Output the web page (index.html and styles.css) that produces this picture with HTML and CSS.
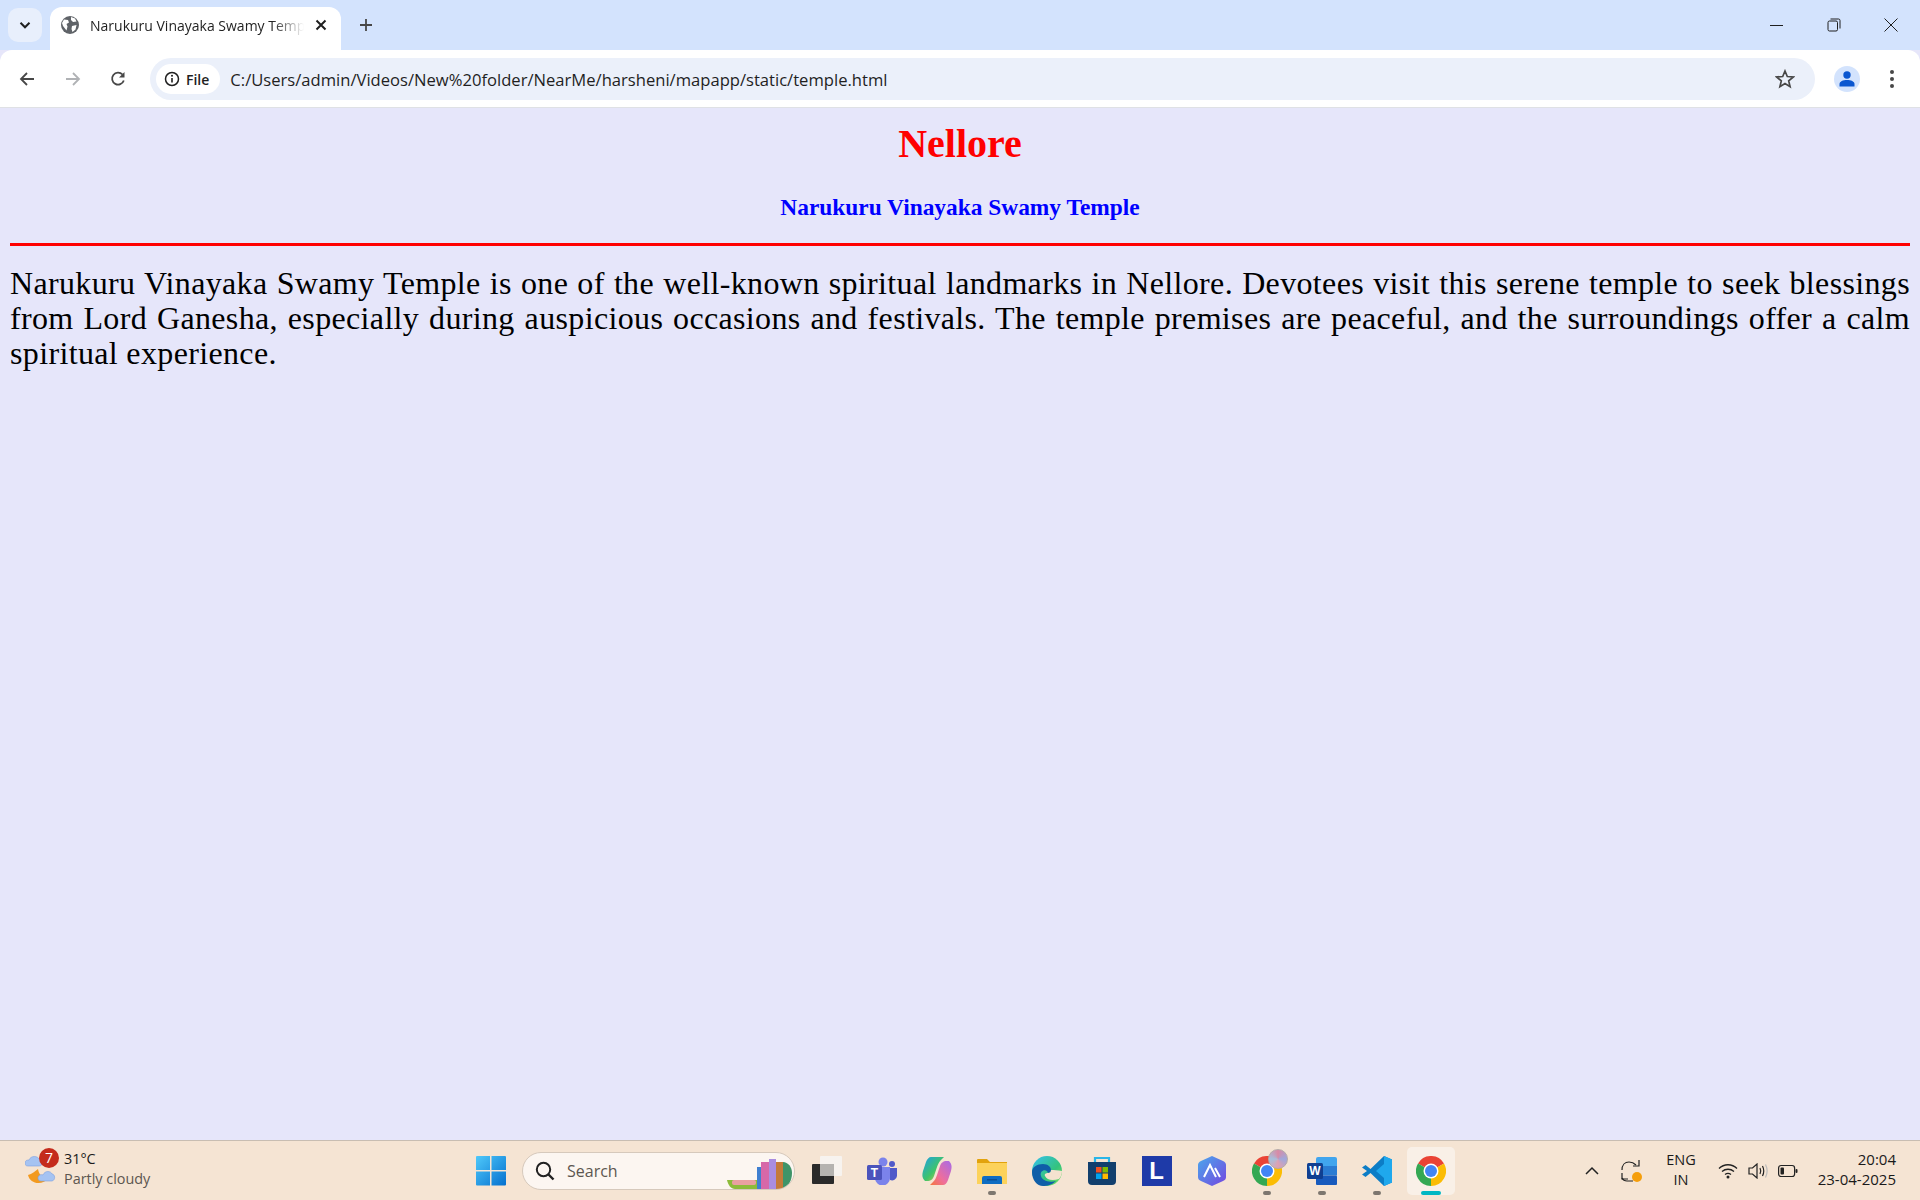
FILE: index.html
```html
<!DOCTYPE html>
<html lang="en">
<head>
  <meta charset="UTF-8" />
  <title>Narukuru Vinayaka Swamy Temple</title>
  <link rel="stylesheet" href="styles.css">
</head>
<body>

  <div class="tabstrip">
    <div class="tab-search">
      <svg width="14" height="14" viewBox="0 0 14 14"><path d="M2.500 4.800 7 9.300l4.500-4.500" fill="none" stroke="#1f1f1f" stroke-width="2"/></svg>
    </div>
    <div class="tab">
      <svg class="tab-globe" width="18" height="18" viewBox="0 0 18 18"><circle cx="9" cy="9" r="9" fill="#5f6368"/><path d="M3 3.500 7 4l1 2.500L5.500 8l1 2.500-1 4L2 10 1 7zM10 1l4 1.500 1.500 3-3.500.5-2-2zM11 10l4.500-1-1 4.500L11.500 16l-1-3z" fill="#fff"/></svg>
      <span class="tab-title">Narukuru Vinayaka Swamy Temple</span>
      <svg class="tab-close" width="12" height="12" viewBox="0 0 12 12"><path d="M1.500 1.500l9 9m0-9l-9 9" stroke="#1f1f1f" stroke-width="2"/></svg>
    </div>
    <svg class="new-tab" width="14" height="14" viewBox="0 0 14 14"><path d="M7 1v12M1 7h12" stroke="#474747" stroke-width="1.800"/></svg>
    <div class="window-btns">
      <svg width="14" height="14" viewBox="0 0 14 14"><path d="M0 7.500h13" stroke="#1f1f1f" stroke-width="1"/></svg>
      <svg width="14" height="14" viewBox="0 0 14 14"><rect x="1" y="3" width="9.500" height="10" rx="1.500" fill="none" stroke="#1f1f1f"/><path d="M3.500 1h8a1.500 1.500 0 0 1 1.500 1.500v8" fill="none" stroke="#1f1f1f"/></svg>
      <svg width="14" height="14" viewBox="0 0 14 14"><path d="M.5.500l13 13m0-13l-13 13" stroke="#1f1f1f" stroke-width="1"/></svg>
    </div>
  </div>

  <div class="toolbar">
    <svg class="nav-icon" width="16" height="16" viewBox="0 0 16 16"><path d="M15 8H2M8 2 2 8l6 6" fill="none" stroke="#474747" stroke-width="1.800"/></svg>
    <svg class="nav-icon" width="16" height="16" viewBox="0 0 16 16"><path d="M1 8h13M8 2l6 6-6 6" fill="none" stroke="#b0b2b5" stroke-width="1.800"/></svg>
    <svg class="nav-icon" width="16" height="16" viewBox="0 0 16 16"><path d="M13.800 9.500A6 6 0 1 1 12.500 3.500" fill="none" stroke="#474747" stroke-width="1.800"/><path d="M14.500 1v5.500H9z" fill="#474747"/></svg>
    <div class="omnibox">
      <div class="chip">
        <svg width="16" height="16" viewBox="0 0 16 16"><circle cx="8" cy="8" r="6.500" fill="none" stroke="#1f1f1f" stroke-width="1.500"/><path d="M8 7v4.500" stroke="#1f1f1f" stroke-width="1.600"/><circle cx="8" cy="4.800" r="1" fill="#1f1f1f"/></svg>
        <span>File</span>
      </div>
      <span class="url">C:/Users/admin/Videos/New%20folder/NearMe/harsheni/mapapp/static/temple.html</span>
      <svg class="star" width="20" height="20" viewBox="0 0 20 20"><path d="M10 2l2.300 5.500 6 .5-4.600 3.900 1.400 5.800-5.100-3.100-5.100 3.100 1.400-5.800L1.700 8l6-.5z" fill="none" stroke="#474747" stroke-width="1.700"/></svg>
    </div>
    <div class="avatar">
      <svg width="18" height="18" viewBox="0 0 18 18"><circle cx="9" cy="5" r="3.700" fill="#0b57d0"/><path d="M1.500 16.500v-2.500c0-2.500 3.500-4 7.500-4s7.500 1.500 7.500 4v2.500z" fill="#0b57d0"/></svg>
    </div>
    <div class="menu-dots"><i></i><i></i><i></i></div>
  </div>

  <main class="page">
    <h1>Nellore</h1>
    <h3>Narukuru Vinayaka Swamy Temple</h3>
    <hr>
    <p>Narukuru Vinayaka Swamy Temple is one of the well-known spiritual landmarks in Nellore. Devotees visit this serene temple to seek blessings from Lord Ganesha, especially during auspicious occasions and festivals. The temple premises are peaceful, and the surroundings offer a calm spiritual experience.</p>
  </main>

  <footer class="taskbar">
    <div class="weather">
      <div class="weather-icon">
        <svg width="36" height="40" viewBox="0 0 36 40">
          <path d="M3 24c2 9 14 11 21 3-6 1-10-3-11-9-3 2-6 5-10 6z" fill="#f39a1f"/>
          <path d="M13 27c0-3 3-4 5-3 2-5 8-4 9-1 3 0 4 6 0 7H16c-2 0-3-1-3-3z" fill="#a5c3f2" stroke="#7ba0e0" stroke-width=".6"/>
          <path d="M0 12c0-3 3-3 4-3 2-5 9-4 10-1 4 0 5 7 0 7H3c-2 0-3-1-3-3z" fill="#a5c3f2" stroke="#7ba0e0" stroke-width=".6"/>
        </svg>
        <span class="weather-badge">7</span>
      </div>
      <div class="weather-text">
        <span class="temp">31°C</span>
        <span class="cond">Partly cloudy</span>
      </div>
    </div>

    <div class="task-center">
      <div class="task-slot">
        <svg width="30" height="30" viewBox="0 0 30 30"><defs><linearGradient id="win" x1="0" y1="0" x2="1" y2="1"><stop offset="0" stop-color="#4fc9fa"/><stop offset="1" stop-color="#0470cf"/></linearGradient></defs><path d="M0 1a1 1 0 0 1 1-1h13v14H0zM15.500 0H29a1 1 0 0 1 1 1v13H15.500zM0 15.500h14V29.500H1a1 1 0 0 1-1-1zM15.500 15.500H30V28.500a1 1 0 0 1-1 1H15.500z" fill="url(#win)"/></svg>
      </div>
      <div class="task-search">
        <svg width="20" height="20" viewBox="0 0 20 20"><circle cx="8.500" cy="8.500" r="6.700" fill="none" stroke="#222" stroke-width="2"/><path d="M13.500 13.500l5 5" stroke="#222" stroke-width="2.400"/></svg>
        <span>Search</span>
        <svg class="books" width="66" height="30" viewBox="0 0 66 30">
          <path d="M0 21h30v9H8c-4 0-7-4-8-9z" fill="#8dbb3a"/><rect x="5" y="21" width="24" height="5" rx="2" fill="#e9a0a0"/>
          <rect x="30" y="8" width="4" height="22" fill="#3f7fd0"/><rect x="34" y="3" width="8" height="27" fill="#d768a8"/>
          <rect x="42" y="0" width="7" height="30" fill="#a98de0"/><rect x="49" y="3" width="7" height="27" fill="#c47a3a"/>
          <path d="M56 3c5 0 9 5 9 11 0 8-4 14-9 16z" fill="#3f9468"/>
        </svg>
      </div>
      <div class="task-slot">
        <svg width="30" height="30" viewBox="0 0 30 30"><rect x="8" y="0" width="22" height="20" rx="1" fill="#f7f3ef"/><rect x="0" y="8" width="22" height="20" rx="1" fill="#2a2a2a"/><rect x="8" y="8" width="14" height="12" fill="#b5b3b0"/></svg>
      </div>
      <div class="task-slot">
        <svg width="30" height="28" viewBox="0 0 30 28"><circle cx="16" cy="5" r="4.500" fill="#7b83eb"/><circle cx="25" cy="7" r="3" fill="#5059c9"/><path d="M20 11h10v8a5 5 0 0 1-7 4z" fill="#5059c9"/><path d="M8 10h15v11a7 7 0 0 1-15 0z" fill="#7b83eb"/><rect x="0" y="8" width="15" height="15" rx="1.500" fill="#4b53bc"/><text class="teams-t" x="7.500" y="20">T</text></svg>
      </div>
      <div class="task-slot">
        <svg width="30" height="28" viewBox="0 0 30 28"><defs><linearGradient id="cop1" x1="0" y1="0" x2="1" y2="1"><stop offset="0" stop-color="#1f9fe8"/><stop offset=".55" stop-color="#3fc46a"/><stop offset="1" stop-color="#f0c53a"/></linearGradient><linearGradient id="cop2" x1="1" y1="0" x2="0" y2="1"><stop offset="0" stop-color="#a86ae8"/><stop offset=".6" stop-color="#ee6e9c"/><stop offset="1" stop-color="#f5763c"/></linearGradient></defs><path d="M9 0h13l-3 3c-2 2-3 4-4 7l-3 9c-1 3-3 5-7 5H3c-3-3-3-6-2-10l3-9c1-3 3-5 5-5z" fill="url(#cop1)"/><path d="M21 28H8l3-3c2-2 3-4 4-7l3-9c1-3 3-5 7-5h2c3 3 3 6 2 10l-3 9c-1 3-3 5-5 5z" fill="url(#cop2)"/></svg>
      </div>
      <div class="task-slot running">
        <svg width="30" height="27" viewBox="0 0 30 27"><path d="M0 3a1 1 0 0 1 1-1h9l3 3h17v22H0z" fill="#e2a30d"/><rect x="0" y="6" width="30" height="21" fill="#fcd25b"/><path d="M5 27v-6a2 2 0 0 1 2-2h16a2 2 0 0 1 2 2v6z" fill="#0e6cc2"/><rect x="10" y="22" width="10" height="1.500" fill="#0a4f94"/></svg>
      </div>
      <div class="task-slot">
        <svg width="30" height="30" viewBox="0 0 30 30"><defs><linearGradient id="edge1" x1="0" y1="0" x2="1" y2="1"><stop offset="0" stop-color="#35c1f1"/><stop offset=".6" stop-color="#34c37d"/><stop offset="1" stop-color="#7ae35c"/></linearGradient></defs><circle cx="15" cy="15" r="15" fill="url(#edge1)"/><path d="M0 16c0-5 5-8 11-8 5 0 8 3 8 6 0 2-1 3-3 3-1-5-9-3-7 3 1 4 7 7 15 5-4 4-9 5-13 5C5 30 0 24 0 16z" fill="#0f5ea8"/><path d="M16 17c2 0 3-1 3-3 3 0 7 0 11 1 0 3-1 6-3 8-7 2-12 1-14-3-1-2 1-3 3-3z" fill="#f5e2cf"/></svg>
      </div>
      <div class="task-slot">
        <svg width="30" height="30" viewBox="0 0 30 30"><path d="M8 7V2h14v5" fill="none" stroke="#29b6e8" stroke-width="2.200"/><path d="M1 6h28v19a4 4 0 0 1-4 4H5a4 4 0 0 1-4-4z" fill="#123f6d"/><rect x="9" y="11" width="5.500" height="5.500" fill="#f25022"/><rect x="15.500" y="11" width="5.500" height="5.500" fill="#7fba00"/><rect x="9" y="17.500" width="5.500" height="5.500" fill="#00a4ef"/><rect x="15.500" y="17.500" width="5.500" height="5.500" fill="#ffb900"/></svg>
      </div>
      <div class="task-slot">
        <div class="l-icon">L</div>
      </div>
      <div class="task-slot">
        <svg width="28" height="30" viewBox="0 0 28 30"><defs><linearGradient id="arc" x1="0" y1="0" x2="1" y2="1"><stop offset="0" stop-color="#4aa8ec"/><stop offset="1" stop-color="#7446e0"/></linearGradient></defs><path d="M14 0l11 5c2 1 3 2 3 4v12c0 2-1 3-3 4l-11 5-11-5c-2-1-3-2-3-4V9c0-2 1-3 3-4z" fill="url(#arc)"/><path d="M6 21l6-12 6 12M17 12l5 9" fill="none" stroke="#fff" stroke-width="2"/></svg>
      </div>
      <div class="task-slot running">
        <svg class="chrome" width="30" height="30" viewBox="0 0 30 30"><use href="#chrome-mark"/></svg>
        <span class="chrome-badge"></span>
      </div>
      <div class="task-slot running">
        <svg width="30" height="28" viewBox="0 0 30 28"><path d="M9 2a2 2 0 0 1 2-2h17a2 2 0 0 1 2 2v7H9z" fill="#41a5ee"/><rect x="9" y="9" width="21" height="9.500" fill="#2b7cd3"/><rect x="9" y="18.500" width="21" height="9.500" rx="1" fill="#185abd"/><rect x="0" y="6" width="16" height="16" rx="1.500" fill="#103f91"/><text class="word-w" x="8" y="18">W</text></svg>
      </div>
      <div class="task-slot running">
        <svg width="30" height="30" viewBox="0 0 30 30"><path d="M22 0l8 3.500v23L22 30 8.500 17l-5 4L0 18.500 5 15 0 11.500 3.500 9l5 4z" fill="#0c7dc6"/><path d="M22 0l8 3.500v23L22 30zM22 8l-8 7 8 7z" fill="#1fa8ed" fill-rule="evenodd"/></svg>
      </div>
      <div class="task-slot active">
        <svg class="chrome" width="30" height="30" viewBox="0 0 30 30">
          <defs>
            <g id="chrome-mark">
              <path d="M15 15 2 7.500A15 15 0 0 1 28 7.500z" fill="#ea4335"/>
              <path d="M15 15 28 7.500A15 15 0 0 1 15 30z" fill="#fbbc04"/>
              <path d="M15 15 15 30A15 15 0 0 1 2 7.500z" fill="#34a853"/>
              <circle cx="15" cy="15" r="7.500" fill="#fff"/>
              <circle cx="15" cy="15" r="6" fill="#4285f4"/>
            </g>
          </defs>
          <use href="#chrome-mark"/>
        </svg>
      </div>
    </div>

    <div class="tray">
      <svg class="tray-chevron" width="14" height="10" viewBox="0 0 14 10"><path d="M1 8l6-6 6 6" fill="none" stroke="#222" stroke-width="1.500"/></svg>
      <div class="sync">
        <svg width="20" height="24" viewBox="0 0 20 24"><path d="M1 11c0-5 3-8 7-8 3 0 5 1 7 3M12 22H6c-2 0-4-1-5-3" fill="none" stroke="#222" stroke-width="1.200"/><path d="M18 1v6h-6M1 14v6h6" fill="none" stroke="#222" stroke-width="1.200"/></svg>
        <span class="sync-dot"></span>
      </div>
      <div class="lang"><span>ENG</span><span>IN</span></div>
      <div class="tray-icons">
        <svg width="20" height="16" viewBox="0 0 20 16"><path d="M1 5.500c5-5 13-5 18 0M4 8.500c3.500-3 8.500-3 12 0M7 11.500c2-1.500 4-1.500 6 0" fill="none" stroke="#222" stroke-width="1.300"/><circle cx="10" cy="14" r="1.500" fill="#222"/></svg>
        <svg width="20" height="16" viewBox="0 0 20 16"><path d="M1 5h3.500L9 1v14l-4.500-4H1z" fill="none" stroke="#222" stroke-width="1.200"/><path d="M12 5c1 2 1 4 0 6M14.500 3c1.500 3 1.500 7 0 10" fill="none" stroke="#222" stroke-width="1.200"/><path d="M17.500 1.500c2 4 2 9 0 13" fill="none" stroke="#bbb" stroke-width="1.200"/></svg>
        <svg width="20" height="14" viewBox="0 0 20 14"><rect x=".6" y="1.500" width="16" height="11" rx="2.500" fill="none" stroke="#222" stroke-width="1.200"/><rect x="2.500" y="3.500" width="3.500" height="7" rx="1" fill="#222"/><rect x="17.500" y="5" width="2" height="4" rx="1" fill="#222"/></svg>
      </div>
      <div class="clock"><span>20:04</span><span>23-04-2025</span></div>
    </div>
  </footer>

</body>
</html>
```

FILE: styles.css
```css
html, body {
  height: 100%;
}

body {
  margin: 0;
  display: flex;
  flex-direction: column;
  height: 1200px;
  overflow: hidden;
  background-color: #e6e6fa;
  font-family: "Open Sans", "Noto Sans", sans-serif;
}

svg {
  display: block;
  flex: none;
}


/* browser tabs */
.tabstrip {
  display: flex;
  align-items: flex-end;
  height: 50px;
  background-color: #d3e3fd;
  flex: none;
}

.tab-search {
  width: 34px;
  height: 34px;
  margin: 0 8px 8px 8px;
  background-color: #e8effc;
  border-radius: 10px;
  display: flex;
  justify-content: center;
  align-items: center;
}

.tab {
  width: 291px;
  height: 43px;
  background-color: white;
  border-radius: 12px 12px 0 0;
  display: flex;
  align-items: center;
  padding: 0 14px 7px 11px;
  box-sizing: border-box;
  gap: 11px;
}

.tab-title {
  flex: 1;
  overflow: hidden;
  white-space: nowrap;
  font-size: 14px;
  color: #1f1f1f;
  -webkit-mask-image: linear-gradient(to right, black 85%, transparent 100%);
  mask-image: linear-gradient(to right, black 85%, transparent 100%);
}

.new-tab {
  margin: 0 0 18px 18px;
}

.window-btns {
  margin-left: auto;
  display: flex;
  gap: 43px;
  padding: 0 22px 18px 0;
}


/* address bar */
.toolbar {
  height: 58px;
  background-color: white;
  display: flex;
  align-items: center;
  padding: 1px 10px 0 19px;
  box-sizing: border-box;
  border-bottom: 1px solid #dfe1e5;
  flex: none;
  border-radius: 12px 12px 0 0;
}

.nav-icon {
  margin-right: 30px;
}

.nav-icon:nth-child(2) {
  margin-right: 29px;
}

.nav-icon:nth-child(3) {
  margin-right: 24px;
}

.omnibox {
  flex: 1;
  height: 42px;
  background-color: #ebf0fa;
  border-radius: 21px;
  display: flex;
  align-items: center;
  padding: 0 20px 0 6px;
  box-sizing: border-box;
}

.chip {
  display: flex;
  align-items: center;
  gap: 6px;
  height: 30px;
  padding: 0 11px 0 8px;
  box-sizing: border-box;
  background-color: white;
  border-radius: 15px;
  font-size: 14px;
  font-weight: 600;
  color: #1f1f1f;
}

.url {
  margin-left: 10px;
  font-size: 16.600px;
  color: #1f1f1f;
}

.star {
  margin-left: auto;
}

.avatar {
  width: 26px;
  height: 26px;
  margin-left: 19px;
  border-radius: 50%;
  background-color: #d3e3fd;
  display: flex;
  justify-content: center;
  align-items: center;
}

.menu-dots {
  display: flex;
  flex-direction: column;
  gap: 3px;
  margin-left: 30px;
  margin-right: 16px;
}

.menu-dots i {
  display: block;
  width: 4px;
  height: 4px;
  border-radius: 50%;
  background-color: #474747;
}


/* page content */
.page {
  flex: 1;
  padding: 0 10px;
  color: black;
  font-family: "Liberation Serif", serif;
}

h1 {
  margin: 16px 0 0 0;
  font-size: 40px;
  line-height: 40px;
  text-align: center;
  color: red;
}

h3 {
  margin: 30px 0 0 0;
  font-size: 23.400px;
  line-height: 26px;
  text-align: center;
  color: blue;
}

hr {
  margin: 23px 0 0 0;
  border: none;
  height: 3px;
  background-color: red;
}

p {
  margin: 20px 0 0 0;
  font-size: 32px;
  line-height: 35px;
  letter-spacing: 0.350px;
  text-align: justify;
}


/* taskbar */
.taskbar {
  height: 60px;
  flex: none;
  box-sizing: border-box;
  background-color: #f5e4d3;
  border-top: 1px solid #c8bdb2;
  display: grid;
  grid-template-columns: 1fr auto 1fr;
  align-items: center;
  color: #1a1a1a;
  font-family: "Open Sans", "Noto Sans", sans-serif;
}

.weather {
  display: flex;
  align-items: center;
  padding-left: 25px;
  gap: 3px;
}

.weather-icon {
  position: relative;
  width: 36px;
  height: 40px;
}

.weather-badge {
  position: absolute;
  left: 14px;
  top: -3px;
  width: 20px;
  height: 20px;
  border-radius: 50%;
  background-color: #c42b1c;
  color: white;
  font-size: 14px;
  line-height: 20px;
  text-align: center;
}

.weather-text {
  display: flex;
  flex-direction: column;
  margin-bottom: 3px;
  font-size: 14.400px;
  line-height: 20px;
}

.cond {
  color: #5c5650;
}

.task-center {
  display: flex;
  align-items: center;
  margin-right: 2px;
}

.task-slot {
  position: relative;
  width: 55px;
  height: 48px;
  box-sizing: border-box;
  display: flex;
  justify-content: center;
  align-items: center;
}

.task-slot.running::after,
.task-slot.active::after {
  content: "";
  position: absolute;
  left: 50%;
  bottom: 0;
  width: 8px;
  height: 4px;
  margin-left: -4px;
  border-radius: 2px;
  background-color: #7d766f;
}

.task-slot.active {
  background-color: #f9f0e7;
  border-radius: 5px;
  margin-left: 3px;
  width: 48px;
}

.task-slot.active::after {
  width: 20px;
  margin-left: -10px;
  background-color: #00b7c3;
}

.task-search {
  position: relative;
  width: 273px;
  height: 38px;
  box-sizing: border-box;
  margin: 0 4px;
  padding-left: 12px;
  display: flex;
  align-items: center;
  gap: 12px;
  background-color: #fcf6f1;
  border: 1px solid #d6c9bc;
  border-radius: 19px;
  overflow: hidden;
  font-size: 16px;
  color: #5c5650;
}

.books {
  position: absolute;
  right: 1px;
  bottom: 0;
}

.l-icon {
  width: 30px;
  height: 30px;
  background-color: #1e3aa8;
  color: white;
  font-family: "Liberation Sans", sans-serif;
  font-weight: bold;
  font-size: 24px;
  line-height: 30px;
  text-align: center;
}

.teams-t,
.word-w {
  font-family: "Liberation Sans", sans-serif;
  font-weight: bold;
  font-size: 12px;
  fill: white;
  text-anchor: middle;
}

.chrome-badge {
  position: absolute;
  right: 6px;
  top: 2px;
  width: 20px;
  height: 20px;
  border-radius: 50%;
  background: conic-gradient(#d98aa5, #9fa8dc, #e0a0b0, #a6c0dc, #d98aa5);
  border: 1px solid #b5aaa8;
  box-sizing: border-box;
}

.tray {
  display: flex;
  align-items: center;
  justify-content: flex-end;
  padding-right: 24px;
}

.sync {
  position: relative;
  margin-left: 22px;
}

.sync-dot {
  position: absolute;
  right: -1px;
  bottom: 1px;
  width: 10px;
  height: 10px;
  border-radius: 50%;
  background-color: #f59e0b;
}

.lang {
  display: flex;
  flex-direction: column;
  align-items: center;
  margin-left: 25px;
  margin-bottom: 2px;
  font-size: 14.500px;
  line-height: 20px;
}

.tray-icons {
  display: flex;
  align-items: center;
  gap: 10px;
  margin-left: 22px;
}

.clock {
  display: flex;
  flex-direction: column;
  align-items: flex-end;
  margin-left: 20px;
  margin-bottom: 3px;
  font-size: 15px;
  line-height: 20px;
}
```
